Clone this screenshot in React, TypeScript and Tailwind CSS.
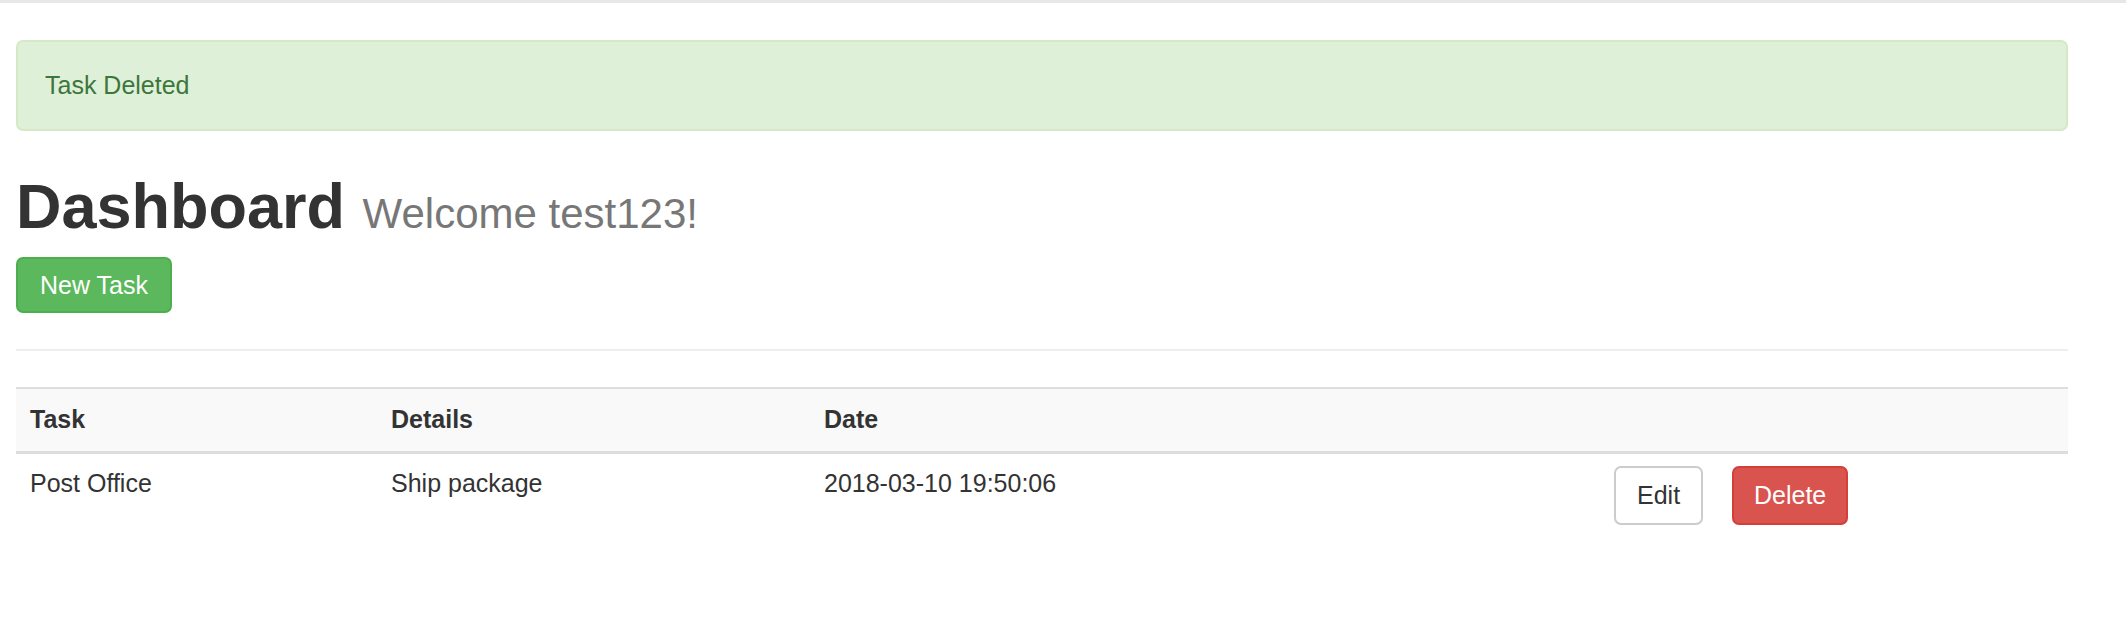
import React from "react";

export default function App() {
  return (
    <div className="h-[624px] w-[2126px] overflow-hidden bg-white font-['Liberation_Sans',Arial,Helvetica,sans-serif] text-[25px] leading-[35px] text-[#333]">
      <div className="h-[3px] w-full bg-[#e7e7e7]" />
      <div className="ml-[16px] w-[2052px] pt-[37px]">
        <div className="h-[91px] rounded-[7px] border-2 border-[#d6e9c6] bg-[#dff0d8] px-[27px] py-[26px] text-[#3c763d]">
          Task Deleted
        </div>

        <h1 className="mt-[41px] text-[63px] font-bold leading-[68px] text-[#333]">
          Dashboard{" "}
          <small className="text-[42px] font-normal leading-none text-[#777]">Welcome test123!</small>
        </h1>

        <button className="mt-[17px] inline-flex h-[56px] items-center rounded-[7px] border-2 border-[#4cae4c] bg-[#5cb85c] px-[22px] text-white">
          New Task
        </button>

        <hr className="mt-[36px] border-0 border-t-2 border-[#eee]" />

        <table className="mt-[36px] w-full table-fixed border-collapse text-left">
          <colgroup>
            <col className="w-[361px]" />
            <col className="w-[433px]" />
            <col className="w-[790px]" />
            <col className="w-[118px]" />
            <col />
          </colgroup>
          <thead>
            <tr className="border-t-2 border-b-[3px] border-[#ddd] bg-[#f9f9f9]">
              <th className="px-[14px] pt-[13px] pb-[14px] font-bold">Task</th>
              <th className="px-[14px] pt-[13px] pb-[14px] font-bold">Details</th>
              <th className="px-[14px] pt-[13px] pb-[14px] font-bold">Date</th>
              <th className="px-[14px] pt-[13px] pb-[14px]"></th>
              <th className="px-[14px] pt-[13px] pb-[14px]"></th>
            </tr>
          </thead>
          <tbody>
            <tr>
              <td className="px-[14px] py-[12px] align-top">Post Office</td>
              <td className="px-[14px] py-[12px] align-top">Ship package</td>
              <td className="px-[14px] py-[12px] align-top">2018-03-10 19:50:06</td>
              <td className="px-[14px] py-[12px] align-top">
                <button className="inline-flex h-[59px] items-center rounded-[7px] border-2 border-[#ccc] bg-white px-[21px] text-[#333]">
                  Edit
                </button>
              </td>
              <td className="px-[14px] py-[12px] align-top">
                <button className="inline-flex h-[59px] items-center rounded-[7px] border-2 border-[#d43f3a] bg-[#d9534f] px-[20px] text-white">
                  Delete
                </button>
              </td>
            </tr>
          </tbody>
        </table>
      </div>
    </div>
  );
}
